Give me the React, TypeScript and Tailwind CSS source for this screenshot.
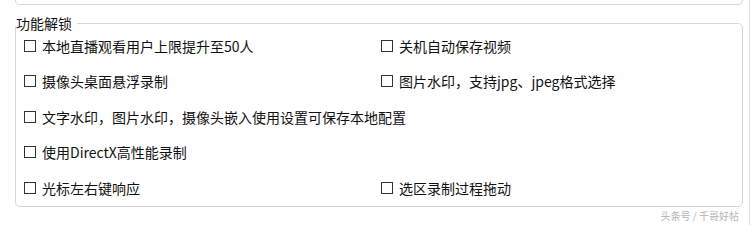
import React from "react";

const font = { fontFamily: '"Noto Sans CJK SC", "Noto Sans", sans-serif' };

function Item({ label }: { label: string }) {
  return (
    <div className="flex items-center h-[35.5px]">
      <span className="w-[12px] h-[12px] border border-[#333] bg-white shrink-0" />
      <span className="ml-[6px] text-[14px] leading-none text-[#111]">{label}</span>
    </div>
  );
}

export default function App() {
  return (
    <div className="w-[750px] h-[225px] bg-white border-r border-[#dcdcdc]" style={font}>
      <div className="ml-[15px] w-[728px] h-[5px] border-b border-x border-[#d6d6d6] rounded-b-[5px]" />
      <fieldset className="ml-[15px] mt-[12px] w-[728px] border border-[#d6d6d6] rounded-[5px]">
        <legend className="pr-[5px] text-[14px] leading-[12px] text-[#111]">功能解锁</legend>
        <div className="grid grid-cols-[357px_1fr] -mt-[1px] pl-[8px]">
          <Item label="本地直播观看用户上限提升至50人" />
          <Item label="关机自动保存视频" />
          <Item label="摄像头桌面悬浮录制" />
          <Item label="图片水印，支持jpg、jpeg格式选择" />
          <div className="col-span-2">
            <Item label="文字水印，图片水印，摄像头嵌入使用设置可保存本地配置" />
          </div>
          <div className="col-span-2">
            <Item label="使用DirectX高性能录制" />
          </div>
          <Item label="光标左右键响应" />
          <Item label="选区录制过程拖动" />
        </div>
      </fieldset>
      <div className="flex justify-end pr-[10px] mt-[2px]">
        <span className="text-[10px] leading-[14px] text-[#b4b4b4]">头条号 / 千哥好帖</span>
      </div>
    </div>
  );
}
